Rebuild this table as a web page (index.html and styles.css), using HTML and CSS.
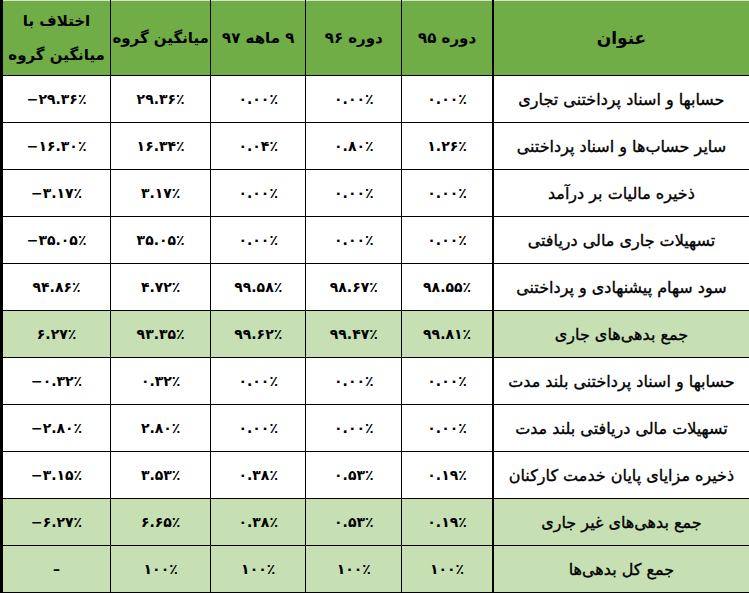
FILE: index.html
```html
<!DOCTYPE html>
<html lang="fa" dir="rtl">
<head>
<meta charset="utf-8">
<link rel="stylesheet" href="styles.css">
</head>
<body>
<table class="grid">
  <colgroup>
    <col class="c-title"><col class="c-95"><col class="c-96"><col class="c-97"><col class="c-avg"><col class="c-diff">
  </colgroup>
  <thead>
    <tr class="head">
      <th class="sep">عنوان</th>
      <th>دوره ۹۵</th>
      <th>دوره ۹۶</th>
      <th>۹ ماهه ۹۷</th>
      <th>میانگین گروه</th>
      <th>اختلاف با<br>میانگین گروه</th>
    </tr>
  </thead>
  <tbody>
    <tr><td class="label sep">حسابها و اسناد پرداختنی تجاری</td><td><bdi dir="ltr">۰.۰۰٪</bdi></td><td><bdi dir="ltr">۰.۰۰٪</bdi></td><td><bdi dir="ltr">۰.۰۰٪</bdi></td><td><bdi dir="ltr">۲۹.۳۶٪</bdi></td><td><bdi dir="ltr">−۲۹.۳۶٪</bdi></td></tr>
    <tr><td class="label sep">سایر حساب‌ها و اسناد پرداختنی</td><td><bdi dir="ltr">۱.۲۶٪</bdi></td><td><bdi dir="ltr">۰.۸۰٪</bdi></td><td><bdi dir="ltr">۰.۰۴٪</bdi></td><td><bdi dir="ltr">۱۶.۳۴٪</bdi></td><td><bdi dir="ltr">−۱۶.۳۰٪</bdi></td></tr>
    <tr><td class="label sep">ذخیره مالیات بر درآمد</td><td><bdi dir="ltr">۰.۰۰٪</bdi></td><td><bdi dir="ltr">۰.۰۰٪</bdi></td><td><bdi dir="ltr">۰.۰۰٪</bdi></td><td><bdi dir="ltr">۳.۱۷٪</bdi></td><td><bdi dir="ltr">−۳.۱۷٪</bdi></td></tr>
    <tr><td class="label sep">تسهیلات جاری مالی دریافتی</td><td><bdi dir="ltr">۰.۰۰٪</bdi></td><td><bdi dir="ltr">۰.۰۰٪</bdi></td><td><bdi dir="ltr">۰.۰۰٪</bdi></td><td><bdi dir="ltr">۳۵.۰۵٪</bdi></td><td><bdi dir="ltr">−۳۵.۰۵٪</bdi></td></tr>
    <tr><td class="label sep">سود سهام پیشنهادی و پرداختنی</td><td><bdi dir="ltr">۹۸.۵۵٪</bdi></td><td><bdi dir="ltr">۹۸.۶۷٪</bdi></td><td><bdi dir="ltr">۹۹.۵۸٪</bdi></td><td><bdi dir="ltr">۴.۷۲٪</bdi></td><td><bdi dir="ltr">۹۴.۸۶٪</bdi></td></tr>
    <tr class="total"><td class="label sep">جمع بدهی‌های جاری</td><td><bdi dir="ltr">۹۹.۸۱٪</bdi></td><td><bdi dir="ltr">۹۹.۴۷٪</bdi></td><td><bdi dir="ltr">۹۹.۶۲٪</bdi></td><td><bdi dir="ltr">۹۳.۳۵٪</bdi></td><td><bdi dir="ltr">۶.۲۷٪</bdi></td></tr>
    <tr><td class="label sep">حسابها و اسناد پرداختنی بلند مدت</td><td><bdi dir="ltr">۰.۰۰٪</bdi></td><td><bdi dir="ltr">۰.۰۰٪</bdi></td><td><bdi dir="ltr">۰.۰۰٪</bdi></td><td><bdi dir="ltr">۰.۳۲٪</bdi></td><td><bdi dir="ltr">−۰.۳۲٪</bdi></td></tr>
    <tr><td class="label sep">تسهیلات مالی دریافتی بلند مدت</td><td><bdi dir="ltr">۰.۰۰٪</bdi></td><td><bdi dir="ltr">۰.۰۰٪</bdi></td><td><bdi dir="ltr">۰.۰۰٪</bdi></td><td><bdi dir="ltr">۲.۸۰٪</bdi></td><td><bdi dir="ltr">−۲.۸۰٪</bdi></td></tr>
    <tr><td class="label sep">ذخیره مزایای پایان خدمت کارکنان</td><td><bdi dir="ltr">۰.۱۹٪</bdi></td><td><bdi dir="ltr">۰.۵۳٪</bdi></td><td><bdi dir="ltr">۰.۳۸٪</bdi></td><td><bdi dir="ltr">۳.۵۳٪</bdi></td><td><bdi dir="ltr">−۳.۱۵٪</bdi></td></tr>
    <tr class="total"><td class="label sep">جمع بدهی‌های غیر جاری</td><td><bdi dir="ltr">۰.۱۹٪</bdi></td><td><bdi dir="ltr">۰.۵۳٪</bdi></td><td><bdi dir="ltr">۰.۳۸٪</bdi></td><td><bdi dir="ltr">۶.۶۵٪</bdi></td><td><bdi dir="ltr">−۶.۲۷٪</bdi></td></tr>
    <tr class="total"><td class="label sep">جمع کل بدهی‌ها</td><td><bdi dir="ltr">۱۰۰٪</bdi></td><td><bdi dir="ltr">۱۰۰٪</bdi></td><td><bdi dir="ltr">۱۰۰٪</bdi></td><td><bdi dir="ltr">۱۰۰٪</bdi></td><td>–</td></tr>
  </tbody>
</table>
</body>
</html>
```
FILE: styles.css
```css
html, body {
  margin: 0;
  padding: 0;
  background: #ffffff;
}
body {
  font-family: "DejaVu Sans", sans-serif;
  color: #000;
}
.grid {
  width: 749px;
  table-layout: fixed;
  border-collapse: collapse;
  border-left: 3px solid #000;
  border-bottom: 2px solid #000;
  border-top: 1px solid #d8e2d0;
}
.c-title { width: 256px; }
.c-95 { width: 91px; }
.c-96 { width: 96px; }
.c-97 { width: 95px; }
.c-avg { width: 100px; }
.c-diff { width: 109px; }
.grid th,
.grid td {
  border: 1px solid #000;
  text-align: center;
  vertical-align: middle;
  padding: 0;
}
.grid thead th {
  border-top: none;
}
.grid th:first-child,
.grid td:first-child {
  border-right: none;
}
.grid .sep {
  border-left: 2px solid #000;
}
.head th {
  height: 74px;
  background: #70ad47;
  font-weight: bold;
  font-size: 15px;
  line-height: 34px;
}
.head th.sep {
  font-size: 17px;
}
.grid tbody td {
  height: 46px;
  font-size: 14px;
  font-weight: bold;
}
.grid tbody td.label {
  font-size: 16px;
  font-weight: normal;
  -webkit-text-stroke: 0.35px #000;
}
.total td {
  background: #c6e0b4;
}
```
